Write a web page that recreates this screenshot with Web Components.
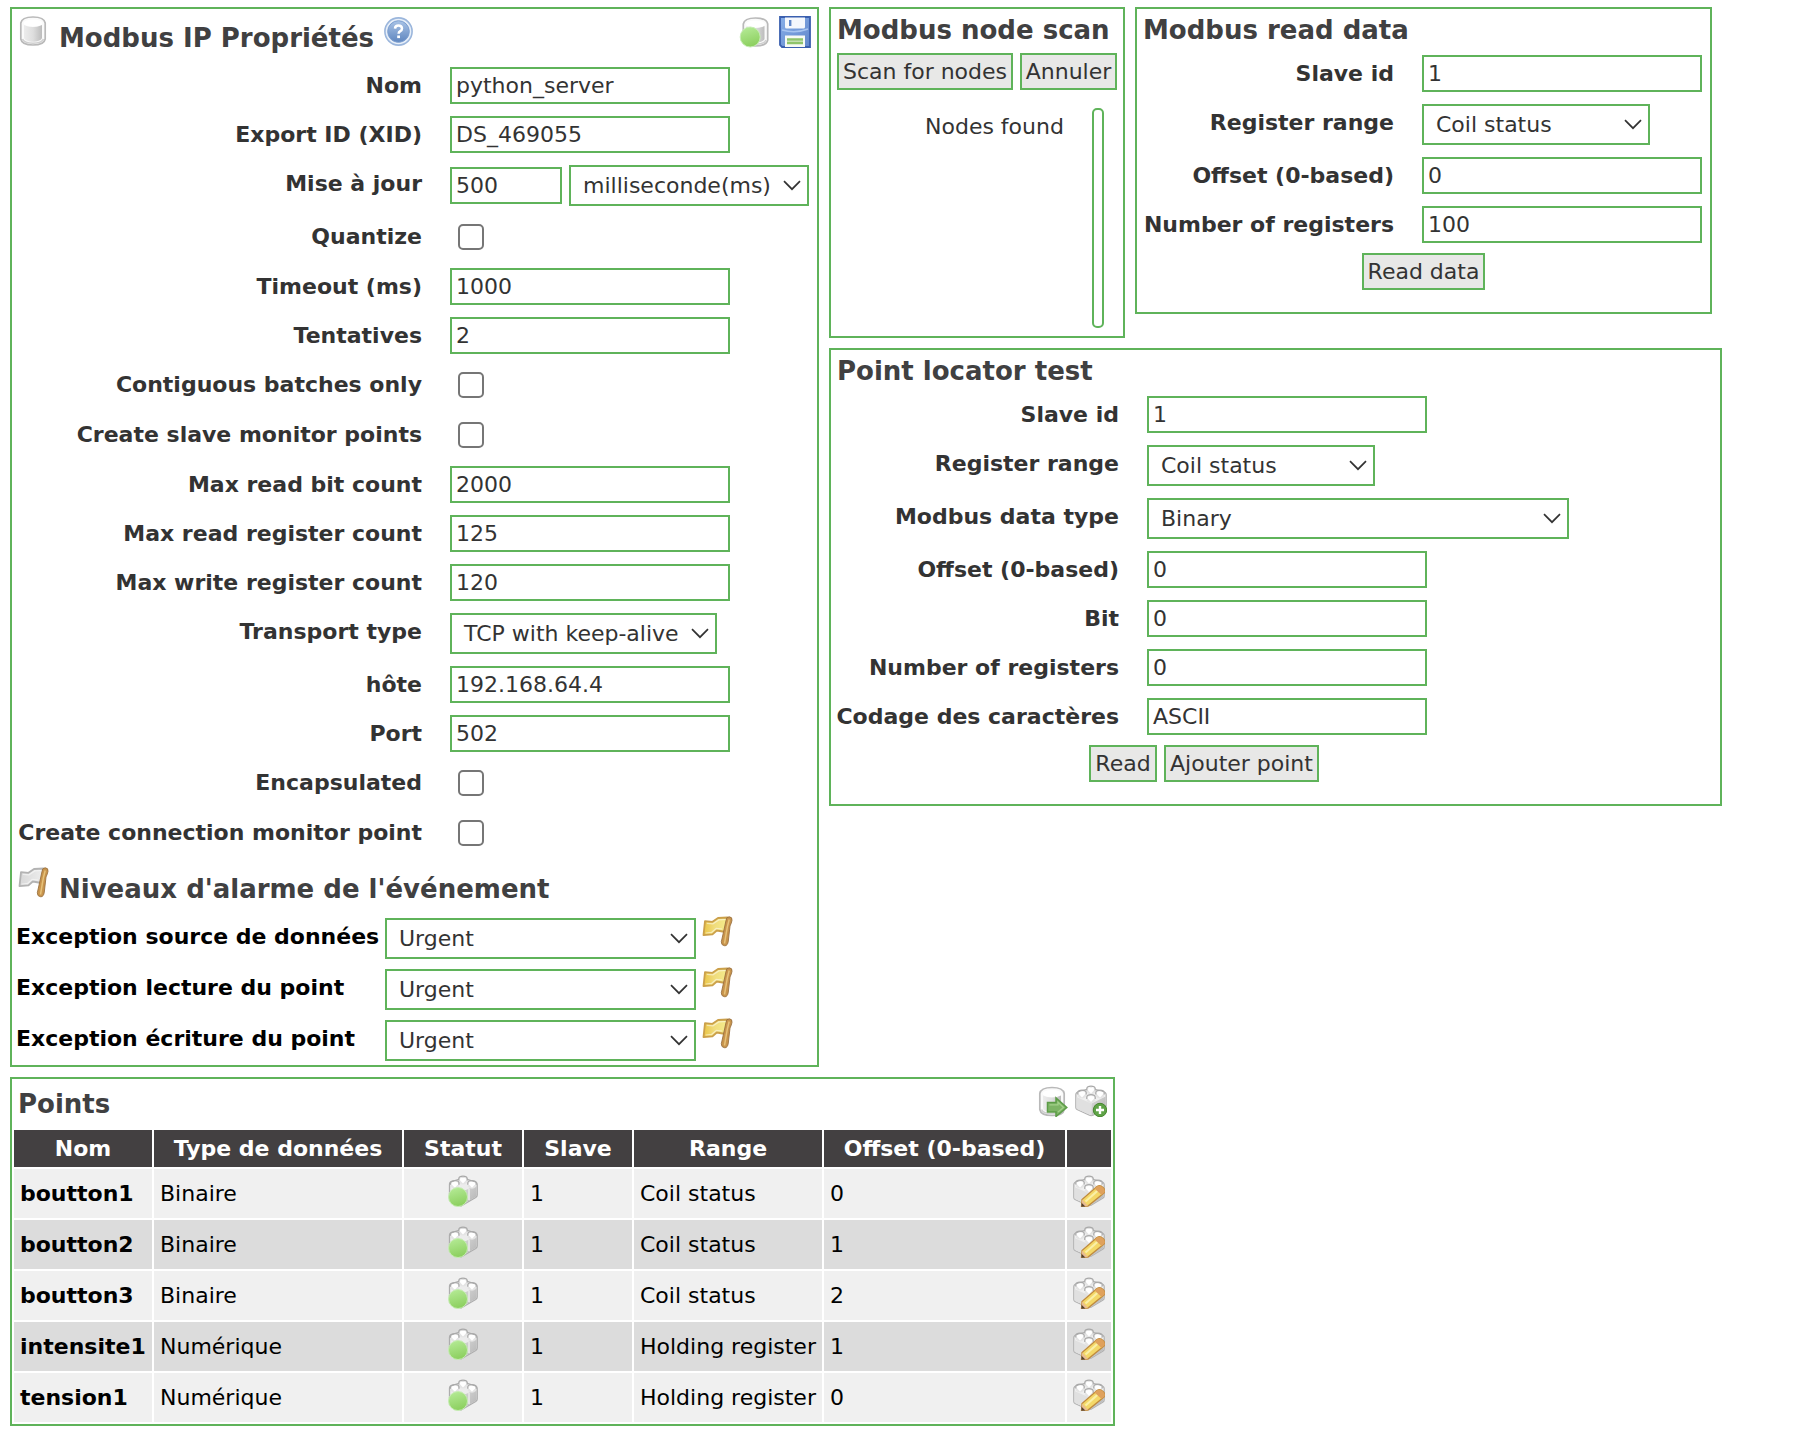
<!DOCTYPE html>
<html lang="fr">
<head>
<meta charset="utf-8">
<title>Modbus IP Propriétés</title>
<style>
  html { background: #fff; }
  body { margin: 0; font: 22px/25px "DejaVu Sans", Verdana, sans-serif; color: #333; }
</style>
</head>
<body>
<modbus-editor></modbus-editor>

<template id="editor">
  <style>
    :host { display: flex; flex-direction: column; align-items: flex-start; gap: 10px; padding: 7px 0 0 10px; width: 1798px; box-sizing: border-box; }
    .top, .pair { display: flex; align-items: flex-start; gap: 10px; }
    .side { display: flex; flex-direction: column; gap: 10px; }
    .inline { display: flex; align-items: center; gap: 7px; }
    .buttons { display: flex; gap: 7px; padding-top: 4px; }
    .buttons.scan { padding: 0 0 0 6px; margin-top: -1px; height: 37px; }
    .props { width: 809px; height: 1060px; }
    .scan-panel { width: 296px; height: 331px; }
    .read-panel { width: 577px; height: 307px; }
    .locator { width: 893px; height: 458px; }
    .points { width: 1105px; height: 349px; }
    .head { display: flex; align-items: flex-start; height: 52px; }
    .head.props-head { padding-left: 6px; }
    .head panel-title { padding: 14px 0 0 9px; }
    .head .spacer { flex: 1; }
    .nodes { display: flex; justify-content: space-between; padding: 18px 19px 0 94px; }
    .nodes span { padding-top: 6px; }
    .nodes i { width: 8px; height: 216px; border: 2px solid #5fb35a; border-radius: 5px; }
    .level { display: flex; align-items: flex-start; height: 51px; color: #000; padding-left: 4px; }
    .level b { width: 369px; padding-top: 6px; }
    .level app-icon { margin: -3px 0 0 6px; }
  </style>
  <div class="top">
    <ui-panel class="props">
      <div class="head props-head">
        <app-icon name="db" style="margin-top:6px"></app-icon>
        <panel-title>Modbus IP Propriétés</panel-title>
        <app-icon name="help" style="margin:7px 0 0 9px"></app-icon>
        <span class="spacer"></span>
        <app-icon name="dbOn" style="margin:7px 8px 0 0"></app-icon>
        <app-icon name="save" style="margin:7px 6px 0 0"></app-icon>
      </div>
      <form-row label="Nom"><text-field>python_server</text-field></form-row>
      <form-row label="Export ID (XID)"><text-field>DS_469055</text-field></form-row>
      <form-row label="Mise à jour"><div class="inline"><text-field style="width:112px">500</text-field><select-field style="width:240px">milliseconde(ms)</select-field></div></form-row>
      <form-row label="Quantize"><check-box></check-box></form-row>
      <form-row label="Timeout (ms)"><text-field>1000</text-field></form-row>
      <form-row label="Tentatives"><text-field>2</text-field></form-row>
      <form-row label="Contiguous batches only"><check-box></check-box></form-row>
      <form-row label="Create slave monitor points"><check-box></check-box></form-row>
      <form-row label="Max read bit count"><text-field>2000</text-field></form-row>
      <form-row label="Max read register count"><text-field>125</text-field></form-row>
      <form-row label="Max write register count"><text-field>120</text-field></form-row>
      <form-row label="Transport type"><select-field style="width:267px">TCP with keep-alive</select-field></form-row>
      <form-row label="hôte"><text-field>192.168.64.4</text-field></form-row>
      <form-row label="Port"><text-field>502</text-field></form-row>
      <form-row label="Encapsulated"><check-box></check-box></form-row>
      <form-row label="Create connection monitor point"><check-box></check-box></form-row>
      <div class="head props-head" style="height:60px">
        <app-icon name="flagGrey" style="margin-top:8px"></app-icon>
        <panel-title style="padding-top:16px">Niveaux d'alarme de l'événement</panel-title>
      </div>
      <div class="level"><b>Exception source de données</b><select-field style="width:311px">Urgent</select-field><app-icon name="flagGold"></app-icon></div>
      <div class="level"><b>Exception lecture du point</b><select-field style="width:311px">Urgent</select-field><app-icon name="flagGold"></app-icon></div>
      <div class="level"><b>Exception écriture du point</b><select-field style="width:311px">Urgent</select-field><app-icon name="flagGold"></app-icon></div>
    </ui-panel>
    <div class="side">
      <div class="pair">
        <ui-panel class="scan-panel">
          <panel-title style="padding:6px 0 9px 6px">Modbus node scan</panel-title>
          <div class="buttons scan"><push-button style="width:176px">Scan for nodes</push-button><push-button style="width:97px">Annuler</push-button></div>
          <div class="nodes"><span>Nodes found</span><i></i></div>
        </ui-panel>
        <ui-panel class="read-panel" style="--label:257px">
          <panel-title style="padding:6px 0 4px 6px">Modbus read data</panel-title>
          <form-row label="Slave id"><text-field>1</text-field></form-row>
          <form-row label="Register range"><select-field style="width:228px">Coil status</select-field></form-row>
          <form-row label="Offset (0-based)"><text-field>0</text-field></form-row>
          <form-row label="Number of registers"><text-field>100</text-field></form-row>
          <div class="buttons" style="padding-left:225px"><push-button style="width:123px">Read data</push-button></div>
        </ui-panel>
      </div>
      <ui-panel class="locator" style="--label:288px">
        <panel-title style="padding:6px 0 4px 6px">Point locator test</panel-title>
        <form-row label="Slave id"><text-field>1</text-field></form-row>
        <form-row label="Register range"><select-field style="width:228px">Coil status</select-field></form-row>
        <form-row label="Modbus data type"><select-field style="width:422px">Binary</select-field></form-row>
        <form-row label="Offset (0-based)"><text-field>0</text-field></form-row>
        <form-row label="Bit"><text-field>0</text-field></form-row>
        <form-row label="Number of registers"><text-field>0</text-field></form-row>
        <form-row label="Codage des caractères"><text-field>ASCII</text-field></form-row>
        <div class="buttons" style="padding-left:258px"><push-button style="width:68px">Read</push-button><push-button style="width:155px">Ajouter point</push-button></div>
      </ui-panel>
    </div>
  </div>
  <ui-panel class="points">
    <div class="head" style="height:51px">
      <panel-title style="padding:10px 0 0 6px">Points</panel-title>
      <span class="spacer"></span>
      <app-icon name="dbGo" style="margin:6px 6px 0 0"></app-icon>
      <app-icon name="brickAdd" style="margin:6px 6px 0 0"></app-icon>
    </div>
    <points-table></points-table>
  </ui-panel>
</template>

<script>
const define = (tag, html) => customElements.define(tag, class extends HTMLElement {
  constructor() {
    super();
    this.attachShadow({ mode: 'open' }).innerHTML = html;
  }
});

define('ui-panel', `<style>:host{display:block;box-sizing:border-box;border:2px solid #5fb35a;background:#fff;flex:none}</style><slot></slot>`);
define('panel-title', `<style>:host{display:block;font-weight:bold;font-size:26px;line-height:30px;color:#404041;white-space:nowrap}</style><slot></slot>`);
define('text-field', `<style>:host{display:block;box-sizing:border-box;width:280px;height:37px;border:2px solid #5fb35a;padding:4px;white-space:nowrap;color:#333;overflow:hidden}</style><slot></slot>`);
define('check-box', `<style>:host{display:block;box-sizing:border-box;width:26px;height:26px;margin:6px 0 6px 8px;border:2px solid #767676;border-radius:5px}</style>`);
define('push-button', `<style>:host{display:block;box-sizing:border-box;height:37px;border:2px solid #5fb35a;padding:4px 0;background:#e8e8e7;color:#333;text-align:center;white-space:nowrap}</style><slot></slot>`);
define('select-field', `<style>:host{display:flex;justify-content:space-between;box-sizing:border-box;height:41px;border:2px solid #5fb35a;padding:6px 6px 6px var(--pad,12px);white-space:nowrap;color:#333}svg{flex:none;margin-top:7px}</style><span><slot></slot></span><svg width="18" height="12" viewBox="0 0 18 12"><path d="M1 1.2 9 9.2 17 1.2" fill="none" stroke="#333" stroke-width="1.7"/></svg>`);

customElements.define('form-row', class extends HTMLElement {
  constructor() {
    super();
    this.attachShadow({ mode: 'open' }).innerHTML = `<style>
      :host{display:flex;align-items:flex-start}
      label{width:var(--label,410px);flex:none;padding-top:12px;text-align:right;font-weight:bold;white-space:nowrap}
      div{padding:6px 0 6px 28px}
    </style><label></label><div><slot></slot></div>`;
    this.shadowRoot.querySelector('label').textContent = this.getAttribute('label');
  }
});

const defs = `<defs>
  <linearGradient id="metal" x1="0" x2="1"><stop offset="0" stop-color="#ececec"/><stop offset=".5" stop-color="#dedede"/><stop offset="1" stop-color="#bcbcbc"/></linearGradient>
  <linearGradient id="glow" x1=".3" y1="0" x2=".6" y2="1"><stop offset="0" stop-color="#b4ea95"/><stop offset="1" stop-color="#8ace5c"/></linearGradient>
  <linearGradient id="blue" x1="0" y1="0" x2="0" y2="1"><stop offset="0" stop-color="#a9c3e6"/><stop offset="1" stop-color="#5f86bf"/></linearGradient>
  <linearGradient id="disk" x1="0" y1="0" x2="1" y2="1"><stop offset="0" stop-color="#86aee8"/><stop offset="1" stop-color="#6287cb"/></linearGradient>
  <linearGradient id="gold" x1="0" x2="1"><stop offset="0" stop-color="#eac545"/><stop offset=".45" stop-color="#f0dc7c"/><stop offset="1" stop-color="#f4ec8c"/></linearGradient>
  <linearGradient id="silver" x1="0" x2="1"><stop offset="0" stop-color="#d8d8d8"/><stop offset="1" stop-color="#ededed"/></linearGradient>
  <linearGradient id="side" x1="0" x2="1" y2="1"><stop offset="0" stop-color="#d9d9d9"/><stop offset="1" stop-color="#b4b4b4"/></linearGradient>
</defs>`;

const cylinder = `<path d="M2.8 8C3.500 4 8 2 15 2s11.500 2 12.200 6v16c-.7 4-5.200 6-12.200 6S3.500 28 2.800 24z" fill="#fafafa" stroke="#b9b9b9" stroke-width="1.700"/>
  <path d="M6 10c5 2.500 13 2.500 18 0v13c-2 5-16 5-18 0z" fill="url(#metal)"/>
  <ellipse cx="15" cy="8" rx="9.500" ry="3.600" fill="#fff"/>
  <path d="M4.500 24c2 5.500 19 5.500 21 0" fill="none" stroke="#cfcfcf" stroke-width="1.500"/>`;

// A brick stud: a short grey drum with a white cap.
const stud = (x, y) => `<path d="M${x - 4.200} ${y}v4q4.200 4 8.400 0v-4z" fill="#e4e4e4"/><path d="M${x - 4.200} ${y + 2}v-2q.4-2.300 4.200-2.300t4.200 2.300v2" fill="none" stroke="#a9a9a9" stroke-width="1.200"/><path d="M${x - 3.200} ${y}q3.200-2 6.400 0v1.500L${x} ${y + 5}l-3.200-3.500z" fill="#fff"/>`;
const brick = `<path d="M.8 9.500Q1 7 4 6.500L16 3l12 3.500q3 .5 3.200 3V21q0 1.500-1.500 2.300L18 30.300q-1.800.8-3.500 0L2 24.500Q.8 24 .8 22.500z" fill="#f0f0f0" stroke="#b0b0b0" stroke-width="1.200"/>
  <path d="M1.500 12 16.500 18.500v12L3 24.500q-1.500-.5-1.500-2z" fill="#e0e0e0"/>
  <path d="M16.500 18.500 30.600 11.500V21q0 1.200-1.200 2L18 30q-.8.500-1.500.5z" fill="url(#side)"/>
  ${stud(16, 3.500)}${stud(7, 7.500)}${stud(25, 7.500)}${stud(16, 12)}`;
const slimBrick = `<path d="M2.500 9.500Q2.500 7 5 6.500L16 3l11 3.500q3 .5 3.200 3V20q0 1.500-1.500 2.500L14 31 4 25.500Q2.500 25 2.500 23z" fill="#ececec" stroke="#adadad" stroke-width="1.300"/>
  <path d="M14 17 29.600 10.500V20q0 1.200-1 2L14 30.300z" fill="url(#side)"/>
  <path d="M22 14v11" stroke="#e2e2e2" stroke-width="2"/>
  ${stud(16, 3.500)}${stud(7.800, 7.800)}${stud(25, 7.800)}`;

const flag = (cloth, edge) => `<path d="M3 6.200 10.500 6.800 16 3 25.500 2.500 23.500 17 14.800 15.500 10.500 19.300 1.500 20.200z" fill="url(#${cloth})" stroke="${edge}" stroke-width="1.800" stroke-linejoin="round"/>
  <path d="M4.800 8.300 11 8.800 16.700 4.900 24 4.500M3.600 18 9.700 17.300 14.300 13.400 20 14" fill="none" stroke="#fff" stroke-opacity=".5" stroke-width="1.200"/>
  <path d="M24 5.500Q24 2 27.200 1.800 30.500 2 30 5.300 29.500 8 28 11L26.300 26q-.6 4.800-3.500 4.800-3.600-.3-3.500-4L21.500 17z" fill="#c8944c" stroke="#9b7342" stroke-width=".9"/>
  <path d="M27.200 4.500q-2 7-2.900 13.500L22.500 28.500" fill="none" stroke="#e6c27a" stroke-width="1.500"/>`;

const icons = {
  db: cylinder,
  dbOn: `<g transform="translate(1.500 0)">${cylinder}</g><circle cx="11.200" cy="21" r="10" fill="url(#glow)" stroke="#c6edb3" stroke-width="1"/>`,
  dbGo: `<g transform="translate(0 .5)">${cylinder}</g><path d="M10.500 17.500h8.500v-4.500L29.800 22.500 19 31.500v-4.500h-8.500z" fill="#7db465" stroke="#5c9c47" stroke-width="1.500"/><path d="M12.500 19.800h8.500v-2.500l5.500 5.200-5.500 4.500" fill="none" stroke="#a2d089" stroke-width="1.300"/>`,
  save: `<path d="M1 1h30v30H3l-2-2z" fill="url(#disk)" stroke="#3a5faf" stroke-width="1.800"/>
    <path d="M6 1.500h20V11q0 1.500-1.500 1.500h-17Q6 12.500 6 11z" fill="#f4f7fc"/><rect x="10" y="4" width="2.400" height="6" fill="#5f86c8"/>
    <path d="M3 14q13 4 26-1" stroke="#a7c4f0" stroke-width="1.500" fill="none"/>
    <rect x="6" y="19.500" width="20" height="11.500" fill="#f7faf4"/><path d="M8 22.200h16v2.600H8zM8 25.600h16v2.600H8z" fill="#8fc46a"/>`,
  help: `<circle cx="15.500" cy="15.500" r="13.600" fill="#e7eff9" stroke="#9bb6dc" stroke-width="1.600"/><circle cx="15.500" cy="15.500" r="10.800" fill="url(#blue)" stroke="#7d9fd0" stroke-width="1"/>
    <path d="M12 12.600q.2-3 3.500-3t3.500 2.900q0 1.700-1.700 2.700-1.700 1-1.700 2.600" fill="none" stroke="#fff" stroke-width="2.500"/><rect x="14.200" y="19.500" width="2.800" height="2.600" fill="#fff"/>`,
  brickOn: `${slimBrick}<circle cx="11" cy="22" r="9.500" fill="url(#glow)" stroke="#c6edb3" stroke-width="1"/>`,
  brickAdd: `${brick}<circle cx="25" cy="25" r="6.700" fill="#5fa347" stroke="#47872f" stroke-width="1"/><path d="M25 21v8M21 25h8" stroke="#fff" stroke-width="2.400"/>`,
  brickEdit: `${brick}<path d="M8.500 31.500 9 24.500 24 11.500q3-2 6 1t1 5.500L15 31z" fill="#f4d868" stroke="#c08b3e" stroke-width="1.300"/>
    <path d="M12.500 26.500 26 14.500" stroke="#faf0a8" stroke-width="2.200"/><path d="M24 11.500q3-2 6 1t1 5.500l-2.500 2-7-6.500z" fill="#dfa15c"/><path d="M9 24.500l6 6.500-6.500.5z" fill="#e9bd92"/><path d="M8.300 31.800l.3-4 3.700 3.700z" fill="#53402f"/>`,
  flagGrey: flag('silver', '#b3b3b3'),
  flagGold: flag('gold', '#cba04a')
};

customElements.define('app-icon', class extends HTMLElement {
  constructor() {
    super();
    this.attachShadow({ mode: 'open' }).innerHTML = `<style>:host{display:block;width:32px;height:32px;flex:none}svg{display:block}</style><svg width="32" height="32" viewBox="0 0 32 32">${defs}${icons[this.getAttribute('name')]}</svg>`;
  }
});

customElements.define('points-table', class extends HTMLElement {
  constructor() {
    super();
    const heads = ['Nom', 'Type de données', 'Statut', 'Slave', 'Range', 'Offset (0-based)', ''];
    const rows = [
      ['boutton1', 'Binaire', 1, 'Coil status', 0],
      ['boutton2', 'Binaire', 1, 'Coil status', 1],
      ['boutton3', 'Binaire', 1, 'Coil status', 2],
      ['intensite1', 'Numérique', 1, 'Holding register', 1],
      ['tension1', 'Numérique', 1, 'Holding register', 0]
    ];
    const icon = name => `<div class="ic"><app-icon name="${name}"></app-icon></div>`;
    this.attachShadow({ mode: 'open' }).innerHTML = `<style>
      :host{display:flex;flex-direction:column;gap:2px;padding:0 2px;color:#000}
      .row{display:grid;grid-template-columns:138px 248px 118px 108px 188px 241px 44px;gap:2px;height:49px}
      .row>div{background:#f0f0f0;padding:12px 0 0 6px;white-space:nowrap}
      .row.even>div{background:#dcdcdc}
      .row>.ic{display:flex;justify-content:center;padding:6px 0 0}
      .row.head{height:37px}
      .row.head>div{background:#434041;color:#fff;font-weight:bold;text-align:center;padding:6px 0 0}
    </style><div class="row head">${heads.map(h => `<div>${h}</div>`).join('')}</div>` +
    rows.map(([n, t, s, r, o], i) => `<div class="row${i % 2 ? ' even' : ''}"><div><b>${n}</b></div><div>${t}</div>${icon('brickOn')}<div>${s}</div><div>${r}</div><div>${o}</div>${icon('brickEdit')}</div>`).join('');
  }
});

customElements.define('modbus-editor', class extends HTMLElement {
  constructor() {
    super();
    this.attachShadow({ mode: 'open' }).append(document.getElementById('editor').content.cloneNode(true));
  }
});
</script>
</body>
</html>
